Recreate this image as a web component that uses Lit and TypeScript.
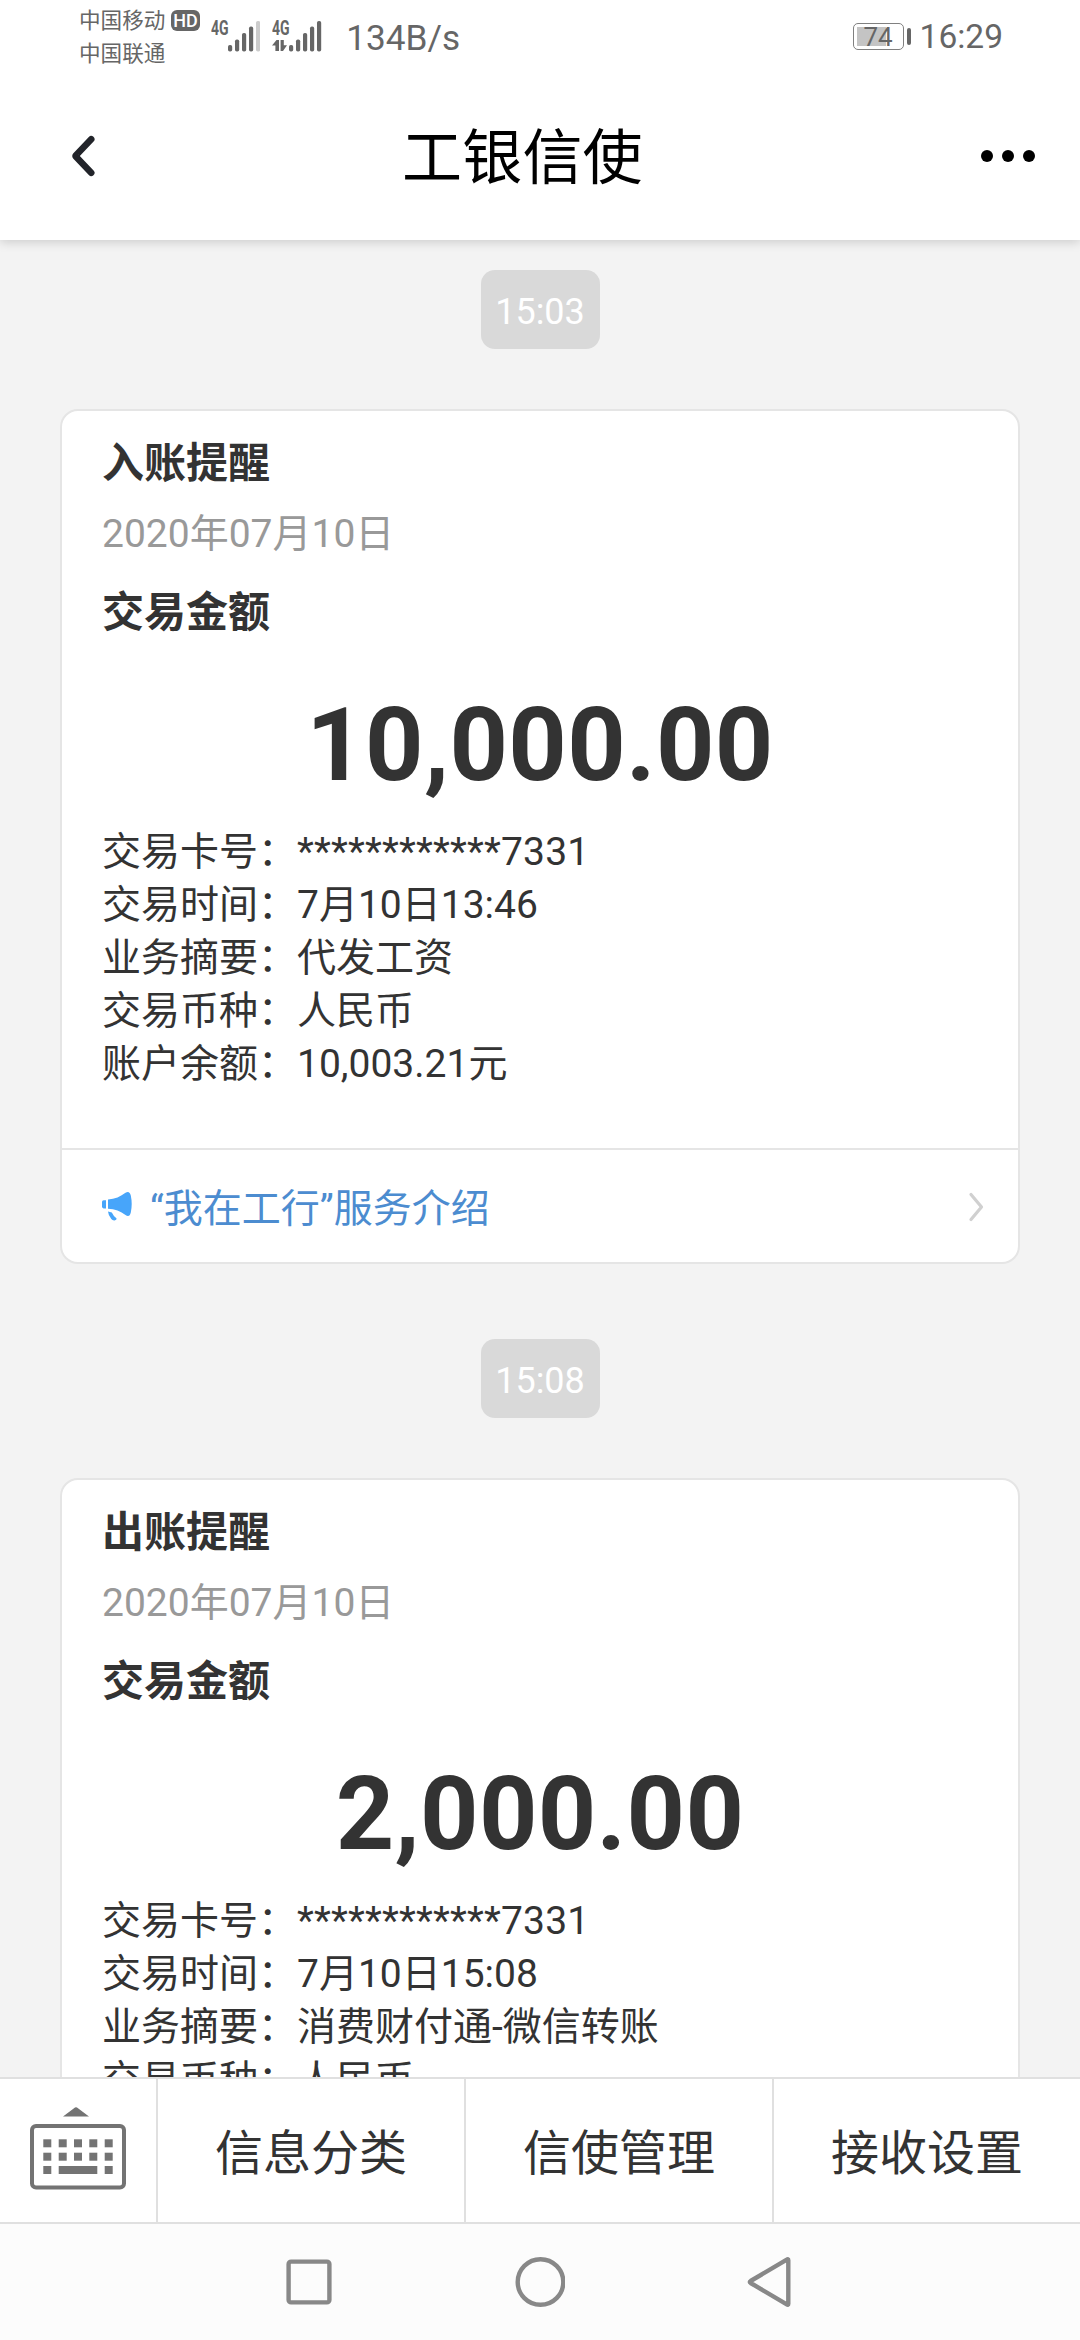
import { LitElement, html, css, svg } from "lit";
import { customElement, property } from "lit/decorators.js";
import { classMap } from "lit/directives/class-map.js";

interface Notice {
  time: string;
  title: string;
  date: string;
  amount: string;
  rows: [string, string][];
}

const notices: Notice[] = [
  {
    time: "15:03",
    title: "入账提醒",
    date: "2020年07月10日",
    amount: "10,000.00",
    rows: [
      ["交易卡号：", "************7331"],
      ["交易时间：", "7月10日13:46"],
      ["业务摘要：", "代发工资"],
      ["交易币种：", "人民币"],
      ["账户余额：", "10,003.21元"],
    ],
  },
  {
    time: "15:08",
    title: "出账提醒",
    date: "2020年07月10日",
    amount: "2,000.00",
    rows: [
      ["交易卡号：", "************7331"],
      ["交易时间：", "7月10日15:08"],
      ["业务摘要：", "消费财付通-微信转账"],
      ["交易币种：", "人民币"],
    ],
  },
];

// Five signal bars, each 4px wide on a 7px pitch
const barTops = [24, 18.4, 12, 5.6, 0];
const signalBars = (x: number, lit: number) =>
  barTops.map(
    (t, i) => svg`<rect x=${x + i * 7} y=${t} width="4.2" height=${30.6 - t} rx="1.8" fill=${i < lit ? "#666" : "#ccc"}></rect>`
  );

@customElement("status-bar")
export class StatusBar extends LitElement {
  static styles = css`
    :host {
      display: flex;
      height: 72px;
      box-sizing: border-box;
      padding: 0 77px 0 79px;
      color: #666;
      align-items: flex-start;
    }
    .carriers {
      font-size: 21.6px;
      line-height: 33px;
      padding-top: 4px;
      width: 92px;
    }
    .carrier {
      white-space: nowrap;
    }
    .hd {
      width: 29px;
      height: 21px;
      margin-top: 10px;
      border-radius: 6px;
      background: #666;
      color: #fff;
      font-size: 18px;
      font-weight: 500;
      line-height: 21px;
      text-align: center;
    }
    .net {
      display: flex;
      flex-direction: column;
      font-size: 20px;
      font-weight: 700;
      line-height: 16px;
      margin-top: 20px;
      width: 17px;
    }
    .first {
      margin-left: 11px;
    }
    .second {
      margin-left: 12px;
    }
    .gen {
      transform: scaleX(0.7);
      transform-origin: left;
    }
    .signal {
      display: block;
      margin-top: 20.6px;
      width: 32.4px;
      height: 31px;
    }
    .arrows {
      display: block;
      margin-top: 4px;
      width: 16px;
      height: 11px;
    }
    .speed {
      font-size: 35.2px;
      line-height: 40px;
      margin: 18px 0 0 24.5px;
    }
    .right {
      display: flex;
      margin-left: auto;
    }
    .battery {
      display: grid;
      place-items: center;
      width: 51px;
      height: 27px;
      box-sizing: border-box;
      border: 1.5px solid #808080;
      border-radius: 5px;
      margin-top: 23px;
      font-size: 26px;
      line-height: 20px;
      background: linear-gradient(#c4c4c4, #c4c4c4) 3px 3px / 29px 19px no-repeat;
    }
    .nub {
      width: 4px;
      height: 17px;
      border-radius: 2px;
      background: #666;
      margin: 28px 0 0 3px;
    }
    .clock {
      font-size: 33.5px;
      line-height: 40px;
      margin: 17px 0 0 9px;
    }
  `;

  render() {
    return html`
      <div class="carriers">
        <div class="carrier">中国移动</div>
        <div class="carrier">中国联通</div>
      </div>
      <div class="hd">HD</div>
      <div class="net first"><span class="gen">4G</span></div>
      <svg class="signal" viewBox="0 0 32.4 31">${signalBars(0, 4)}</svg>
      <div class="net second">
        <span class="gen">4G</span>
        <svg class="arrows" viewBox="0 0 16 11">
          <path d="M0 5.500 4.500 0H7v11H3.400V5.500zM8.600 0h3.200v5.200H15L11 11H8.600z" fill="#666"></path>
        </svg>
      </div>
      <svg class="signal" viewBox="0 0 32.4 31">${signalBars(0, 5)}</svg>
      <div class="speed">134B/s</div>
      <div class="right">
        <div class="battery">74</div>
        <div class="nub"></div>
        <div class="clock">16:29</div>
      </div>
    `;
  }
}

@customElement("title-bar")
export class TitleBar extends LitElement {
  static styles = css`
    :host {
      display: grid;
      grid-template-columns: 402px 1fr 96px;
      align-items: center;
      height: 168px;
    }
    .back {
      display: block;
      width: 26px;
      height: 42px;
      margin-left: 70px;
    }
    .title {
      font-size: 60px;
      line-height: 80px;
      color: #000;
      letter-spacing: 0.2px;
      padding-top: 6px;
    }
    .more {
      display: block;
      width: 54px;
      height: 12px;
      margin-left: -3px;
    }
  `;

  render() {
    return html`
      <svg class="back" viewBox="0 0 26 42">
        <path d="M21.2 4.2 6 20.2a1.2 1.2 0 0 0 0 1.6l15.2 16" fill="none" stroke="#22242a" stroke-width="6.6" stroke-linecap="round" stroke-linejoin="round"></path>
      </svg>
      <div class="title">工银信使</div>
      <svg class="more" viewBox="0 0 54 12">
        <circle cx="6" cy="6" r="6"></circle>
        <circle cx="27" cy="6" r="6"></circle>
        <circle cx="48" cy="6" r="6"></circle>
      </svg>
    `;
  }
}

@customElement("notice-card")
export class NoticeCard extends LitElement {
  @property({ attribute: false }) notice!: Notice;

  static styles = css`
    :host {
      display: flex;
      flex-direction: column;
      align-items: center;
      flex: none;
      margin-bottom: 75px;
    }
    .time {
      width: 119px;
      height: 79px;
      box-sizing: border-box;
      padding-top: 1px;
      border-radius: 14px;
      background: #d9d9d9;
      color: #fff;
      font-size: 36px;
      line-height: 82px;
      text-align: center;
    }
    .card {
      width: 960px;
      height: 855px;
      box-sizing: border-box;
      margin-top: 60px;
      border: 2px solid #e5e5e5;
      border-radius: 18px;
      background: #fff;
      color: #333;
      display: flex;
      flex-direction: column;
    }
    .body {
      flex: 1;
      padding: 23px 40px 0;
    }
    .heading {
      font-size: 42px;
      font-weight: 700;
      line-height: 60px;
    }
    .date {
      font-size: 39px;
      line-height: 60px;
      color: #999;
      margin: 10px 0 19px;
    }
    .amount {
      font-size: 102px;
      font-weight: 700;
      line-height: 120px;
      letter-spacing: 0.35px;
      text-align: center;
      margin: 42px 0 21px;
    }
    .row {
      font-size: 39px;
      line-height: 53px;
      white-space: nowrap;
    }
    .masked {
      letter-spacing: 0.2px;
    }
    .link {
      display: flex;
      align-items: center;
      height: 112px;
      border-top: 2px solid #e5e5e5;
      padding: 0 34px 0 40px;
      color: #4c8cd0;
      font-size: 39px;
      line-height: 60px;
    }
    .caption {
      padding-top: 6px;
    }
    .horn {
      width: 32px;
      height: 30px;
      margin-right: 16px;
    }
    .go {
      width: 16px;
      height: 32px;
      margin: 2px 0 0 auto;
    }
  `;

  render() {
    const n = this.notice;
    return html`
      <div class="time">${n.time}</div>
      <div class="card">
        <div class="body">
          <div class="heading">${n.title}</div>
          <div class="date">${n.date}</div>
          <div class="heading">交易金额</div>
          <div class="amount">${n.amount}</div>
          ${n.rows.map(
            ([k, v]) => html`<div class="row">${k}<span class=${classMap({ masked: v.startsWith("*") })}>${v}</span></div>`
          )}
        </div>
        <div class="link">
          <svg class="horn" viewBox="0 0 32 30" fill="#47a5fa">
            <path d="M4 9.200H1.600Q0 9.200 0 11v4.600Q0 17.400 1.600 17.400H4z"></path>
            <path d="M6 8.400C13 8 18.500 5.500 23.500 1.700Q27.500-.8 28.800 4.500Q30.600 13 28.800 21.500Q27.500 27 23.500 24C18.500 20.200 13 18.200 6 17.800z"></path>
            <path d="M6 20.500 9.800 21.400Q11.500 25 14.600 27.600Q14.800 29.300 12.500 29.400Q10.500 29.600 9.300 28Q6.300 24.500 6 20.500z"></path>
          </svg>
          <span class="caption">“我在工行”服务介绍</span>
          <svg class="go" viewBox="0 0 16 32">
            <path d="M3 3.500 13.500 16 3 28.500" fill="none" stroke="#d0d0d0" stroke-width="3.200" stroke-linecap="round" stroke-linejoin="round"></path>
          </svg>
        </div>
      </div>
    `;
  }
}

@customElement("menu-bar")
export class MenuBar extends LitElement {
  static styles = css`
    :host {
      display: grid;
      grid-template-columns: 156px 308px 308px 308px;
      height: 147px;
      box-sizing: border-box;
      border-top: 2px solid #e0e0e0;
      border-bottom: 2px solid #e0e0e0;
      background: #fff;
    }
    .kbd {
      display: block;
      width: 96px;
      height: 84px;
      margin: 27px 0 0 30px;
    }
    .item {
      border-left: 2px solid #e0e0e0;
      color: #333;
      font-size: 48px;
      line-height: 137px;
      padding-top: 6px;
      text-align: center;
    }
  `;

  render() {
    const xs = [13.3, 28.7, 44, 59.3, 74.7];
    return html`
      <svg class="kbd" viewBox="0 0 96 84" fill="#737373">
        <path d="M33 10.600 44 2.200Q46 .4 48 2.200L59 10.600z"></path>
        <rect x="2" y="20" width="92" height="61.500" rx="4" fill="none" stroke="#737373" stroke-width="4"></rect>
        ${xs.map((x) => svg`<rect x=${x} y="33.300" width="8" height="8"></rect><rect x=${x} y="46.700" width="8" height="8"></rect>`)}
        <rect x="13.300" y="60" width="8" height="8"></rect>
        <rect x="28.700" y="60" width="38.600" height="8"></rect>
        <rect x="74.700" y="60" width="8" height="8"></rect>
      </svg>
      ${["信息分类", "信使管理", "接收设置"].map((t) => html`<div class="item">${t}</div>`)}
    `;
  }
}

@customElement("app-root")
export class AppRoot extends LitElement {
  static styles = css`
    :host {
      display: flex;
      flex-direction: column;
      width: 1080px;
      height: 2340px;
      overflow: hidden;
      background: #f3f3f3;
      font-family: Roboto, "Noto Sans CJK SC", sans-serif;
    }
    .top {
      flex: none;
      background: #fff;
      box-shadow: 0 2px 10px rgba(0, 0, 0, 0.17);
      z-index: 1;
    }
    .feed {
      flex: 1;
      min-height: 0;
      overflow: hidden;
      display: flex;
      flex-direction: column;
      padding-top: 30px;
    }
    .menu {
      flex: none;
    }
    .nav {
      flex: none;
      height: 116px;
      background: #fcfcfc;
      display: flex;
      align-items: center;
      justify-content: center;
      gap: 178px;
      padding-right: 3px;
    }
    .key {
      width: 52px;
      height: 52px;
    }
  `;

  render() {
    return html`
      <div class="top">
        <status-bar></status-bar>
        <title-bar></title-bar>
      </div>
      <div class="feed">${notices.map((n) => html`<notice-card .notice=${n}></notice-card>`)}</div>
      <menu-bar class="menu"></menu-bar>
      <div class="nav">
        <svg class="key" viewBox="0 0 52 52" fill="none" stroke="#888" stroke-width="4.400">
          <rect x="5.600" y="5.600" width="40.800" height="40.800" rx="2.500"></rect>
        </svg>
        <svg class="key" viewBox="0 0 52 52" fill="none" stroke="#888" stroke-width="4.400">
          <circle cx="27.500" cy="26" r="22.800"></circle>
        </svg>
        <svg class="key" viewBox="0 0 52 52" fill="none" stroke="#888" stroke-width="4.400" stroke-linejoin="round">
          <path d="M45.300 4.200Q45.300 2.600 43.800 3.600L7.600 25Q6 26 7.600 27L43.800 48.400Q45.300 49.400 45.300 47.800z"></path>
        </svg>
      </div>
    `;
  }
}
